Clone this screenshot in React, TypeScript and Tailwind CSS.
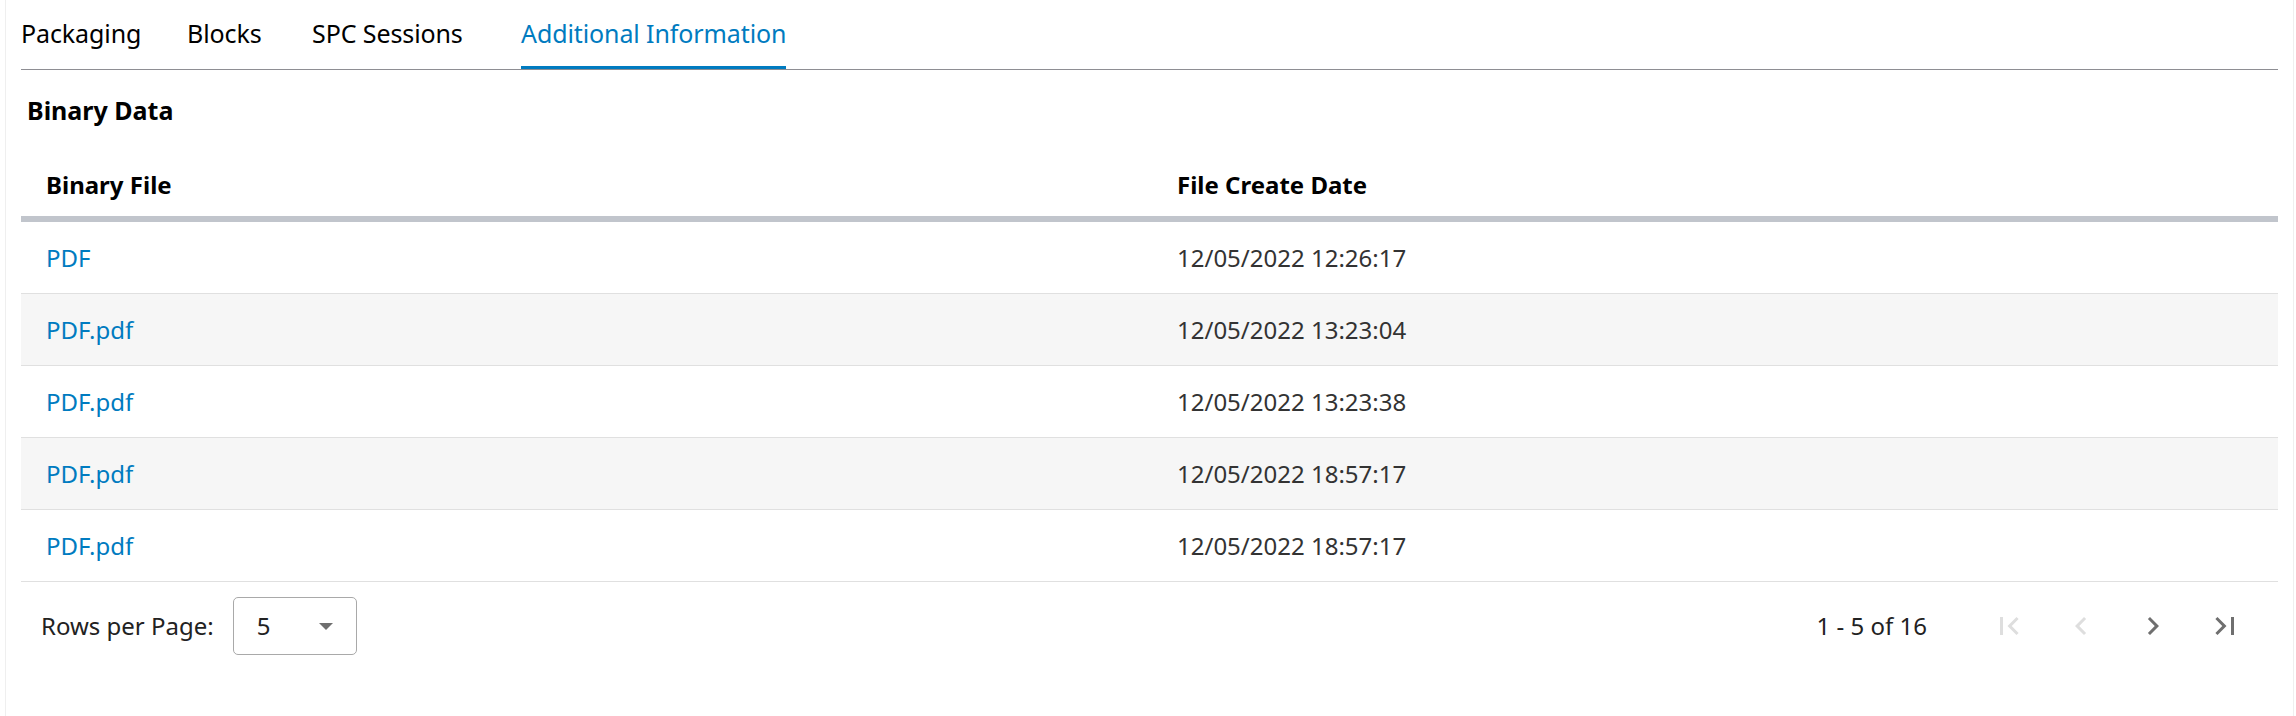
import { useState } from 'react';

const tabs = [
  { label: 'Packaging', width: 'w-[166px]' },
  { label: 'Blocks', width: 'w-[125px]' },
  { label: 'SPC Sessions', width: 'w-[209px]' },
  { label: 'Additional Information', width: '' },
];

const files = [
  { name: 'PDF', created: '12/05/2022 12:26:17' },
  { name: 'PDF.pdf', created: '12/05/2022 13:23:04' },
  { name: 'PDF.pdf', created: '12/05/2022 13:23:38' },
  { name: 'PDF.pdf', created: '12/05/2022 18:57:17' },
  { name: 'PDF.pdf', created: '12/05/2022 18:57:17' },
];

function PageIcon({ d, disabled }: { d: string; disabled?: boolean }) {
  return (
    <button
      disabled={disabled}
      className={`w-[72px] h-[48px] flex items-center justify-center ${
        disabled ? 'text-[#dedede]' : 'text-[#6f6f6f]'
      }`}
    >
      <svg viewBox="0 0 24 24" className="w-[36px] h-[36px]" fill="currentColor">
        <path d={d} />
      </svg>
    </button>
  );
}

export default function App() {
  const [active, setActive] = useState('Additional Information');

  return (
    <div className="h-[716px] bg-white font-['Noto_Sans',sans-serif] text-[#222]">
      <div className="ml-[5px] mr-[2px] h-full border-x border-[#efefef] px-[15px]">
        {/* tabs */}
        <div className="flex border-b border-[#8e8e93]">
          {tabs.map((tab) => (
            <div key={tab.label} className={tab.width}>
              <button
                onClick={() => setActive(tab.label)}
                className={`pt-[17px] pb-[17px] leading-[32px] text-[25px] tracking-[-0.1px] border-b-[3px] ${
                  active === tab.label
                    ? 'text-[#007bc0] border-[#007bc0]'
                    : 'text-[#000] border-transparent'
                }`}
              >
                {tab.label}
              </button>
            </div>
          ))}
        </div>

        <div className="mt-[24px] mb-[27px] pl-[6px] leading-[32px] text-[25px] font-bold text-black">
          Binary Data
        </div>

        {/* table */}
        <div className="grid grid-cols-[1131px_1fr] h-[69px] items-center border-b-[6px] border-[#c1c5cc] text-[24px] font-bold text-black">
          <div className="pl-[25px]">Binary File</div>
          <div className="pl-[25px]">File Create Date</div>
        </div>
        {files.map((f, i) => (
          <div
            key={i}
            className={`grid grid-cols-[1131px_1fr] h-[72px] items-center border-b border-[#e0e0e0] text-[24px] ${
              i % 2 === 1 ? 'bg-[#f6f6f6]' : 'bg-white'
            }`}
          >
            <div className="pl-[25px]">
              <a className="text-[#007bc0] cursor-pointer">{f.name}</a>
            </div>
            <div className="pl-[25px] text-[#333]">{f.created}</div>
          </div>
        ))}

        {/* pagination */}
        <div className="flex items-center h-[88px] text-[24px]">
          <span className="pl-[20px] mr-[19px]">Rows per Page:</span>
          <div className="w-[124px] h-[58px] border border-[#a9a9a9] rounded-[5px] flex items-center justify-between pl-[23px] pr-[23px]">
            <span>5</span>
            <span className="w-0 h-0 border-l-[7px] border-r-[7px] border-t-[7px] border-l-transparent border-r-transparent border-t-[#6f6f6f]" />
          </div>
          <div className="ml-auto flex items-center">
            <span className="mr-[46px]">1 - 5 of 16</span>
            <PageIcon disabled d="M18.41 16.59 13.82 12l4.59-4.59L17 6l-6 6 6 6zM6 6h2v12H6z" />
            <PageIcon disabled d="M15.41 7.41 14 6l-6 6 6 6 1.41-1.41L10.83 12z" />
            <PageIcon d="M10 6 8.59 7.41 13.17 12l-4.58 4.59L10 18l6-6z" />
            <PageIcon d="M5.59 7.41 10.18 12l-4.59 4.59L7 18l6-6-6-6zM16 6h2v12h-2z" />
            <div className="w-[17px]" />
          </div>
        </div>
      </div>
    </div>
  );
}
